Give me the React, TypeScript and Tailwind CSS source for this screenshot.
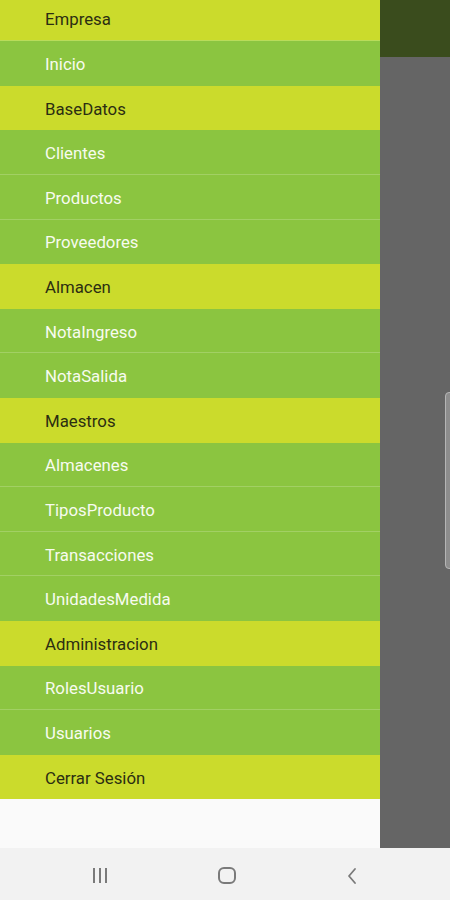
import React from "react";

const items: { label: string; header: boolean }[] = [
  { label: "Empresa", header: true },
  { label: "Inicio", header: false },
  { label: "BaseDatos", header: true },
  { label: "Clientes", header: false },
  { label: "Productos", header: false },
  { label: "Proveedores", header: false },
  { label: "Almacen", header: true },
  { label: "NotaIngreso", header: false },
  { label: "NotaSalida", header: false },
  { label: "Maestros", header: true },
  { label: "Almacenes", header: false },
  { label: "TiposProducto", header: false },
  { label: "Transacciones", header: false },
  { label: "UnidadesMedida", header: false },
  { label: "Administracion", header: true },
  { label: "RolesUsuario", header: false },
  { label: "Usuarios", header: false },
  { label: "Cerrar Sesión", header: true },
];

export default function App() {
  return (
    <div className="w-[450px] h-[900px] flex flex-col overflow-hidden" style={{ fontFamily: "Roboto, 'Noto Sans', sans-serif" }}>
      <div className="h-[848px] flex flex-row relative">
        <div className="w-[380px] flex flex-col bg-[#fafafa] overflow-hidden">
          <div className="flex flex-col mt-[-3.3px]">
            {items.map((it, i) => {
              const next = items[i + 1];
              const line = !it.header && next && !next.header;
              const first = i === 0;
              return (
                <div
                  key={it.label}
                  className={
                    "h-[44.6px] flex items-center pl-[45px] pt-[3px] text-[16.8px] shrink-0 border-b " +
                    (it.header
                      ? "bg-[#cbdb2c] text-[#2b2e12] " + (first ? "border-[#b9dc5a]" : "border-[#cbdb2c]")
                      : "bg-[#8bc540] text-[#f7fbef] " + (line ? "border-[#a2d064]" : "border-[#8bc540]"))
                  }
                >
                  {it.label}
                </div>
              );
            })}
          </div>
          <div className="flex-1 bg-[#fafafa]" />
        </div>
        <div className="w-[70px] flex flex-col">
          <div className="h-[57px] bg-[#3a4c1d]" />
          <div className="flex-1 bg-[#656565]" />
        </div>
        <div className="absolute left-[445px] top-[392px] w-[10px] h-[177px] rounded-[4px] bg-[#8d8d8d] border border-[#b5b5b5]" />
      </div>
      <div className="h-[52px] bg-[#f2f2f2] flex items-center relative">
        <div className="absolute left-[93px] top-[20px] flex gap-[4px]">
          <div className="w-[2px] h-[15px] bg-[#7a7a7a]" />
          <div className="w-[2px] h-[15px] bg-[#7a7a7a]" />
          <div className="w-[2px] h-[15px] bg-[#7a7a7a]" />
        </div>
        <div className="absolute left-[218px] top-[19px] w-[18px] h-[17px] rounded-[6px] border-[2px] border-[#7a7a7a]" />
        <svg className="absolute left-[346px] top-[19px]" width="12" height="18" viewBox="0 0 12 18">
          <path d="M9 2 L3 9 L9 16" stroke="#7a7a7a" strokeWidth="1.8" fill="none" strokeLinecap="round" strokeLinejoin="round" />
        </svg>
      </div>
    </div>
  );
}
